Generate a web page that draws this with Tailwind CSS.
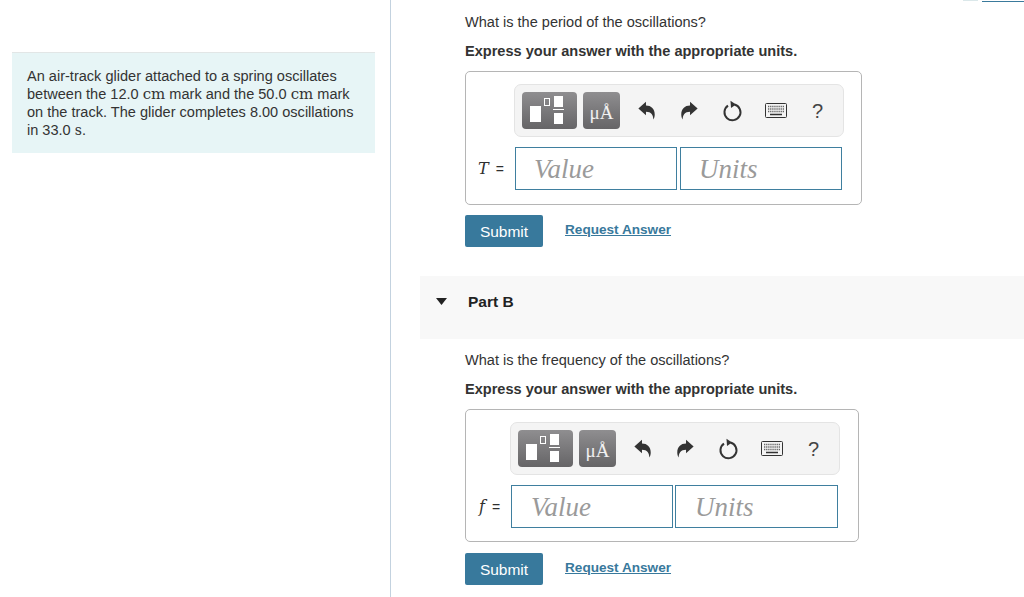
<!DOCTYPE html>
<html lang="en">
<head>
  <meta charset="UTF-8" />
  <title>Part B</title>
  <script src="https://cdn.jsdelivr.net/npm/@tailwindcss/browser@4"></script>
</head>
<body class="bg-white text-[#2f2f2f] font-['Liberation_Sans',Arial,sans-serif] overflow-hidden">
  <div class="flex w-[1024px] h-[597px] overflow-hidden">

    <!-- Left column -->
    <aside class="w-[391px] shrink-0 h-full border-r border-[#c3d2df] pl-3 pr-[15px] pt-[52px]">
      <div class="h-[101px] bg-[#e7f5f6] border-t border-[#e2e6e6] pl-[15px] pr-[15px] pt-[14px] text-[14.55px] leading-[18px] text-[#333]">
        An air-track glider attached to a spring oscillates between the 12.0 <span class="font-['DejaVu_Serif',serif] text-[15px] leading-none">cm</span> mark and the 50.0 <span class="font-['DejaVu_Serif',serif] text-[15px] leading-none">cm</span> mark on the track. The glider completes 8.00 oscillations in 33.0 <span class="font-['DejaVu_Serif',serif] text-[14px] leading-none">s</span>.
      </div>
    </aside>

    <!-- Right column -->
    <main class="relative flex-1 pl-[29px]">
      <div class="absolute top-px right-0 w-[42px] h-px bg-[#3a7a9c]"></div>
      <div class="absolute top-0 right-[46px] w-[15px] h-px bg-[#dbe8ea]"></div>

      <!-- Part A -->
      <section class="pl-[45px]">
        <p class="pt-[13px] text-[14.55px] leading-[18px] text-[#333]">What is the period of the oscillations?</p>
        <p class="mt-[11px] text-[14.55px] leading-[18px] font-bold text-[#333]">Express your answer with the appropriate units.</p>

        <div class="mt-[11px] w-[397px] h-[134px] border border-[#b5b5b5] rounded-[5px] pt-3 pl-[12px]">
          <div class="ml-[36px] w-[330px] h-[53px] bg-[#f4f4f4] border border-[#e4e4e4] rounded-[7px] flex items-center pl-[7px]">
            <div class="w-[55px] h-[37px] rounded-[4px] bg-gradient-to-b from-[#8f8e90] to-[#666567] relative">
              <div class="absolute left-2 top-[14px] w-[11px] h-[16px] bg-white"></div>
              <div class="absolute left-[22px] top-[6px] w-[6px] h-[8px] border border-white"></div>
              <div class="absolute left-[32px] top-[4px] w-[9px] h-[11px] bg-white"></div>
              <div class="absolute left-[31px] top-[17px] w-[11px] h-px bg-white"></div>
              <div class="absolute left-[32px] top-[21px] w-[9px] h-[11px] bg-white"></div>
            </div>
            <div class="ml-[6px] w-[37px] h-[37px] rounded-[4px] bg-gradient-to-b from-[#8f8e90] to-[#666567] text-white/90 font-['Liberation_Serif',serif] text-[19px] leading-[41px] text-center whitespace-nowrap">μÅ</div>
            <svg class="ml-[18px] w-[17px] h-[19px]" viewBox="0 0 16 18"><path d="M0.3 7 L7.5 0.8 V4.3 C12.5 4.3 15.8 7.5 15.8 13 C15.8 14.8 15.2 16.3 14.4 17.6 C14.6 13.5 12.5 10.2 7.5 10.2 V13.4 Z" fill="#333"/></svg>
            <svg class="ml-[26px] w-[17px] h-[19px]" viewBox="0 0 16 18"><path d="M15.7 7 L8.5 0.8 V4.3 C3.5 4.3 0.2 7.5 0.2 13 C0.2 14.8 0.8 16.3 1.6 17.6 C1.4 13.5 3.5 10.2 8.5 10.2 V13.4 Z" fill="#333"/></svg>
            <svg class="ml-[25px] w-[20px] h-[22px]" viewBox="0 0 20 22"><path d="M11.5 4.5 A8 8 0 1 1 5 5.6" fill="none" stroke="#333" stroke-width="2"/><path d="M7.5 0.8 L13 4.6 L8 8 Z" fill="#333"/></svg>
            <svg class="ml-[22px] w-[22px] h-[15px]" viewBox="0 0 22 15"><rect x="0.5" y="0.5" width="21" height="14" rx="1" fill="#f4f4f4" stroke="#333"/><path d="M3 3.5 H19 M3 6 H19 M3 8.5 H19" stroke="#666" stroke-width="1.3" stroke-dasharray="1.3 0.8"/><path d="M5 11.5 H17" stroke="#333" stroke-width="1.5"/></svg>
            <span class="ml-[25px] text-[20px] leading-none text-[#444]">?</span>
          </div>
          <div class="mt-[10px] flex items-center">
            <span class="w-[37px] text-[14px] whitespace-nowrap"><i class="font-['DejaVu_Serif',serif] text-[16px]">T</i><span class="ml-[7px]">=</span></span>
            <div class="w-[162px] h-[43px] border border-[#3f7f9f] pl-[18px] font-['Liberation_Serif',serif] italic text-[27px] leading-[43px] text-[#9a9a9a]">Value</div>
            <div class="ml-[3px] w-[162px] h-[43px] border border-[#3f7f9f] pl-[18px] font-['Liberation_Serif',serif] italic text-[27px] leading-[43px] text-[#9a9a9a]">Units</div>
          </div>
        </div>

        <div class="mt-[10px] flex items-center">
          <button class="w-[78px] h-[32px] rounded-[2px] bg-[#38799c] text-white text-[15.5px] pt-px">Submit</button>
          <a class="ml-[22px] -mt-[2px] text-[13.6px] font-bold text-[#38799c] underline">Request Answer</a>
        </div>
      </section>

      <!-- Part B -->
      <div class="mt-[29px] h-[63px] bg-[#f8f8f8] flex items-start pt-[17px] pl-4">
        <svg class="mt-[5px] w-[11px] h-[7px]" viewBox="0 0 11 7"><path d="M0 0 H11 L5.5 7 Z" fill="#222"/></svg>
        <span class="ml-[21px] text-[15.5px] leading-[17px] font-bold text-[#222]">Part B</span>
      </div>

      <section class="pl-[45px]">
        <p class="pt-[12px] text-[14.55px] leading-[18px] text-[#333]">What is the frequency of the oscillations?</p>
        <p class="mt-[11px] text-[14.55px] leading-[18px] font-bold text-[#333]">Express your answer with the appropriate units.</p>

        <div class="mt-[11px] w-[394px] h-[133px] border border-[#b5b5b5] rounded-[5px] pt-3 pl-[12px]">
          <div class="ml-[32px] w-[330px] h-[53px] bg-[#f4f4f4] border border-[#e4e4e4] rounded-[7px] flex items-center pl-[7px]">
            <div class="w-[55px] h-[37px] rounded-[4px] bg-gradient-to-b from-[#8f8e90] to-[#666567] relative">
              <div class="absolute left-2 top-[14px] w-[11px] h-[16px] bg-white"></div>
              <div class="absolute left-[22px] top-[6px] w-[6px] h-[8px] border border-white"></div>
              <div class="absolute left-[32px] top-[4px] w-[9px] h-[11px] bg-white"></div>
              <div class="absolute left-[31px] top-[17px] w-[11px] h-px bg-white"></div>
              <div class="absolute left-[32px] top-[21px] w-[9px] h-[11px] bg-white"></div>
            </div>
            <div class="ml-[6px] w-[37px] h-[37px] rounded-[4px] bg-gradient-to-b from-[#8f8e90] to-[#666567] text-white/90 font-['Liberation_Serif',serif] text-[19px] leading-[41px] text-center whitespace-nowrap">μÅ</div>
            <svg class="ml-[18px] w-[17px] h-[19px]" viewBox="0 0 16 18"><path d="M0.3 7 L7.5 0.8 V4.3 C12.5 4.3 15.8 7.5 15.8 13 C15.8 14.8 15.2 16.3 14.4 17.6 C14.6 13.5 12.5 10.2 7.5 10.2 V13.4 Z" fill="#333"/></svg>
            <svg class="ml-[26px] w-[17px] h-[19px]" viewBox="0 0 16 18"><path d="M15.7 7 L8.5 0.8 V4.3 C3.5 4.3 0.2 7.5 0.2 13 C0.2 14.8 0.8 16.3 1.6 17.6 C1.4 13.5 3.5 10.2 8.5 10.2 V13.4 Z" fill="#333"/></svg>
            <svg class="ml-[25px] w-[20px] h-[22px]" viewBox="0 0 20 22"><path d="M11.5 4.5 A8 8 0 1 1 5 5.6" fill="none" stroke="#333" stroke-width="2"/><path d="M7.5 0.8 L13 4.6 L8 8 Z" fill="#333"/></svg>
            <svg class="ml-[22px] w-[22px] h-[15px]" viewBox="0 0 22 15"><rect x="0.5" y="0.5" width="21" height="14" rx="1" fill="#f4f4f4" stroke="#333"/><path d="M3 3.5 H19 M3 6 H19 M3 8.5 H19" stroke="#666" stroke-width="1.3" stroke-dasharray="1.3 0.8"/><path d="M5 11.5 H17" stroke="#333" stroke-width="1.5"/></svg>
            <span class="ml-[25px] text-[20px] leading-none text-[#444]">?</span>
          </div>
          <div class="mt-[10px] flex items-center">
            <span class="w-[33px] text-[14px] whitespace-nowrap pl-px"><i class="font-['DejaVu_Serif',serif] text-[16px]">f</i><span class="ml-[7px]">=</span></span>
            <div class="w-[162px] h-[43px] border border-[#3f7f9f] pl-[19px] font-['Liberation_Serif',serif] italic text-[27px] leading-[43px] text-[#9a9a9a]">Value</div>
            <div class="ml-[2px] w-[163px] h-[43px] border border-[#3f7f9f] pl-[19px] font-['Liberation_Serif',serif] italic text-[27px] leading-[43px] text-[#9a9a9a]">Units</div>
          </div>
        </div>

        <div class="mt-[11px] flex items-center">
          <button class="w-[78px] h-[32px] rounded-[2px] bg-[#38799c] text-white text-[15.5px] pt-px">Submit</button>
          <a class="ml-[22px] -mt-[2px] text-[13.6px] font-bold text-[#38799c] underline">Request Answer</a>
        </div>
      </section>
    </main>
  </div>
</body>
</html>
